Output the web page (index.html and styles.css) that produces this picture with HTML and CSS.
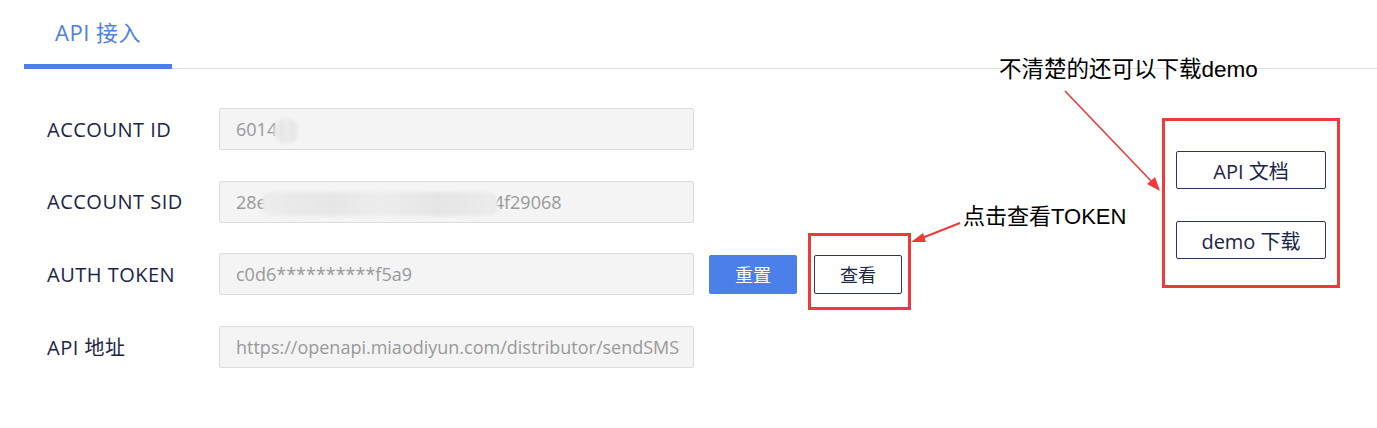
FILE: index.html
```html
<!DOCTYPE html>
<html lang="zh-CN">
<head>
<meta charset="utf-8">
<title>API 接入</title>
<link rel="stylesheet" href="styles.css">
</head>
<body>
<div class="page">
  <div class="tabs">
    <div class="tab active">API 接入</div>
  </div>
  <div class="content">
    <div class="form">
      <div class="row">
        <div class="label">ACCOUNT ID</div>
        <div class="input">6014<span class="blur b1"></span></div>
      </div>
      <div class="row">
        <div class="label">ACCOUNT SID</div>
        <div class="input">28e<span class="blur b2"></span>4f29068</div>
      </div>
      <div class="row">
        <div class="label">AUTH TOKEN</div>
        <div class="input">c0d6**********f5a9</div>
        <button class="btn primary">重置</button>
        <button class="btn outline">查看</button>
      </div>
      <div class="row">
        <div class="label">API 地址</div>
        <div class="input">https://openapi.miaodiyun.com/distributor/sendSMS</div>
      </div>
    </div>
    <div class="aside">
      <button class="btn outline wide">API 文档</button>
      <button class="btn outline wide">demo 下载</button>
    </div>
  </div>

  <div class="mark mark-view"></div>
  <div class="mark mark-aside"></div>
  <div class="note note-token">点击查看TOKEN</div>
  <div class="note note-demo">不清楚的还可以下载demo</div>
  <svg class="arrows" width="1377" height="428" viewBox="0 0 1377 428">
    <line x1="960" y1="223" x2="922" y2="238" stroke="#f03a3a" stroke-width="2"/>
    <polygon points="911,242 923,233 926,242" fill="#f03a3a"/>
    <line x1="1065" y1="91" x2="1152" y2="182" stroke="#f03a3a" stroke-width="1.6"/>
    <polygon points="1160,191 1147,184 1155,177" fill="#f03a3a"/>
  </svg>
</div>
</body>
</html>
```

FILE: styles.css
```css
html, body {
  margin: 0;
  padding: 0;
  background: #ffffff;
}

.page {
  position: relative;
  width: 1377px;
  height: 428px;
  overflow: hidden;
  font-family: "Open Sans", "Noto Sans CJK SC", sans-serif;
}

.tabs {
  margin-left: 24px;
  height: 68px;
  border-bottom: 1px solid #dedede;
  display: flex;
}

.tab {
  width: 148px;
  box-sizing: border-box;
  height: 69px;
  padding-top: 17px;
  text-align: center;
  font-size: 22px;
  color: #4a80e8;
  border-bottom: 5px solid #4a80e8;
  line-height: 30px;
  letter-spacing: 0.5px;
}

.content {
  display: flex;
  justify-content: space-between;
  padding-top: 39px;
}

.form {
  display: flex;
  flex-direction: column;
  gap: 30.5px;
  padding-left: 47px;
}

.row {
  display: flex;
  align-items: center;
  height: 42px;
}

.label {
  width: 172px;
  font-size: 20px;
  letter-spacing: 0.5px;
  color: #1c2448;
}

.input {
  width: 475px;
  height: 42px;
  box-sizing: border-box;
  background: #f4f4f4;
  border: 1px solid #dcdcdc;
  border-radius: 2px;
  padding-left: 16px;
  font-size: 18px;
  color: #999999;
  line-height: 40px;
  white-space: nowrap;
  overflow: hidden;
}

.blur {
  display: inline-block;
  height: 24px;
  vertical-align: middle;
  background: linear-gradient(90deg, #ececec 0%, #e6e6e6 30%, #ededed 50%, #e5e5e5 75%, #ececec 100%);
  border-radius: 10px;
  filter: blur(1.5px);
}

.b1 {
  width: 24px;
  margin-left: -3px;
}

.b2 {
  width: 236px;
  margin-left: -5px;
  margin-right: -4px;
}

.btn {
  font-family: "Noto Sans CJK SC", "Open Sans", sans-serif;
  font-size: 18px;
  height: 39px;
  width: 88px;
  border-radius: 2px;
  box-sizing: border-box;
  cursor: pointer;
  padding: 0;
}

.primary {
  margin-left: 15px;
  background: #4a80e8;
  color: #ffffff;
  border: none;
}

.outline {
  margin-left: 17px;
  background: #ffffff;
  color: #1c2448;
  border: 1px solid #2b3763;
}

.aside {
  display: flex;
  flex-direction: column;
  gap: 32px;
  padding-top: 43px;
  margin-right: 51px;
}

.aside .wide {
  margin-left: 0;
  width: 150px;
  height: 38px;
  font-family: "Open Sans", "Noto Sans CJK SC", sans-serif;
  font-size: 20px;
}

.mark {
  position: absolute;
  border: 3px solid #f03a3a;
  box-sizing: border-box;
}

.mark-view {
  left: 808px;
  top: 233px;
  width: 103px;
  height: 77px;
}

.mark-aside {
  left: 1162px;
  top: 118px;
  width: 178px;
  height: 170px;
}

.note {
  position: absolute;
  font-family: "Liberation Sans", "Noto Sans CJK SC", sans-serif;
  font-size: 22px;
  color: #000000;
  line-height: 28px;
  white-space: nowrap;
}

.note-token {
  left: 963px;
  top: 203px;
}

.note-demo {
  left: 999px;
  top: 56px;
  font-size: 22.5px;
}

.arrows {
  position: absolute;
  left: 0;
  top: 0;
  pointer-events: none;
}
```
